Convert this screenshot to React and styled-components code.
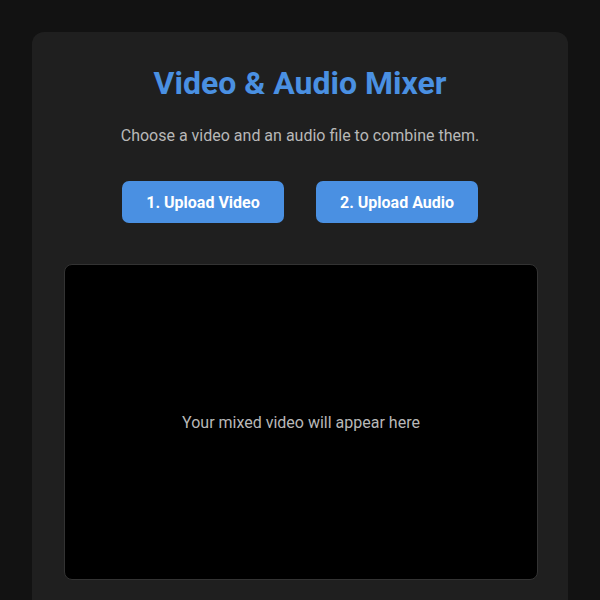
import React from 'react';
import styled, { createGlobalStyle } from 'styled-components';

const GlobalStyle = createGlobalStyle`
  body {
    margin: 0;
    background: #121212;
    font-family: Roboto, "Liberation Sans", sans-serif;
    color: #e0e0e0;
  }
`;

const Page = styled.div`
  padding: 32px;
`;

const Card = styled.div`
  background: #1f1f1f;
  border-radius: 12px;
  padding: 32px;
  display: flex;
  flex-direction: column;
  align-items: center;
`;

const Title = styled.h1`
  margin: 0;
  font-size: 32px;
  line-height: 38px;
  font-weight: 700;
  color: #4a90e2;
`;

const Subtitle = styled.p`
  margin: 24px 0 0;
  font-size: 16px;
  line-height: 19px;
  color: #b8b8b8;
`;

const Buttons = styled.div`
  display: flex;
  gap: 32px;
  margin-top: 36px;
`;

const Button = styled.button`
  width: 162px;
  height: 42px;
  border: none;
  border-radius: 7px;
  background: #4a90e2;
  color: #fff;
  font-family: inherit;
  font-size: 16px;
  font-weight: 700;
  cursor: pointer;
`;

const Player = styled.div`
  margin-top: 41px;
  width: 100%;
  height: 314px;
  background: #000;
  border: 1px solid #333;
  border-radius: 8px;
  display: flex;
  align-items: center;
  justify-content: center;
  color: #b8b8b8;
  font-size: 16px;
  align-self: flex-start;
`;

export default function App() {
  return (
    <Page>
      <GlobalStyle />
      <Card>
        <Title>Video &amp; Audio Mixer</Title>
        <Subtitle>Choose a video and an audio file to combine them.</Subtitle>
        <Buttons>
          <Button>1. Upload Video</Button>
          <Button>2. Upload Audio</Button>
        </Buttons>
        <Player>Your mixed video will appear here</Player>
      </Card>
    </Page>
  );
}
